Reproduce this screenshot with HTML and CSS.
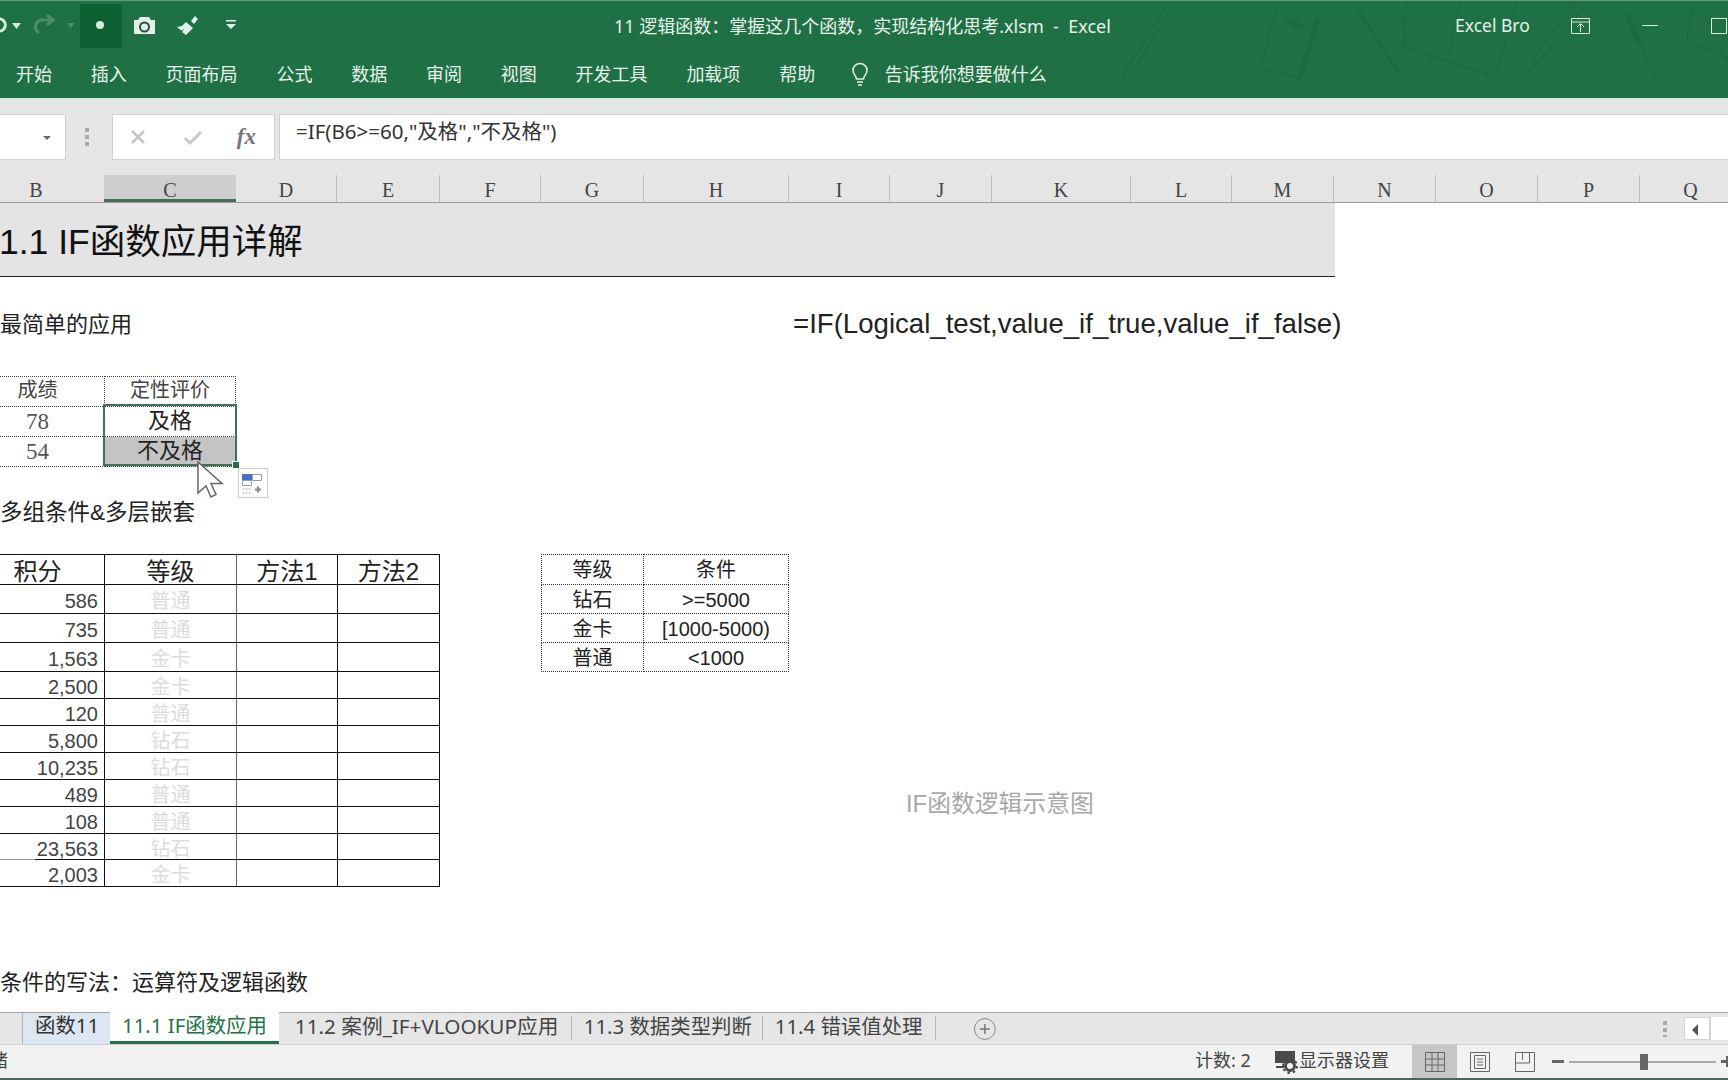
FILE: index.html
```html
<!DOCTYPE html>
<html lang="zh-CN">
    <head>
        <meta charset="utf-8">
        <title>11 逻辑函数 - Excel</title>
        <link rel="stylesheet" href="styles.css">
    </head>
    <body>
        <header class="ribbon">
            <svg class="ribbon-art" width="628" height="98" viewBox="1100 0 628 98">
                <g fill="none" stroke="#1a663c" stroke-width="2">
                    <path d="M1170 10L1128 78M1164 8L1122 76"/>
                    <path d="M1276 10L1260 67L1300 77"/>
                    <path d="M1318 17L1300 77" stroke-width="5"/>
                    <path d="M1286 18L1304 28" stroke-width="6"/>
                    <path d="M1356 5L1398 72" stroke-width="3"/>
                    <path d="M1406 0L1404 47L1496 75L1516 0M1460 0L1448 57"/>
                    <path d="M1588 3L1528 73M1574 0L1532 60"/>
                    <path d="M1627 12L1655 77"/>
                    <path d="M1627 12L1638 40" stroke-width="6"/>
                    <path d="M1693 3L1687 40L1728 57"/>
                </g>
            </svg>
            <div class="titlebar">
                <div class="qat">
                    <svg width="250" height="50" viewBox="0 0 250 50">
                        <path d="M-4 20a6 6 0 1 1 0 10" fill="none" stroke="#d8eadf" stroke-width="3"/>
                        <path d="M12 23h9l-4.500 6z" fill="#d8eadf"/>
                        <path d="M50 20h-8a7 7 0 0 0 -3 13M47 15l6 5l-6 5" fill="none" stroke="#4b8f6a" stroke-width="3"/>
                        <path d="M67 23h8l-4 5z" fill="#4b8f6a"/>
                        <rect x="80" y="4" width="42" height="44" fill="#0f6032"/>
                        <circle cx="100" cy="25" r="4" fill="#d8eadf"/>
                        <path d="M134 20h4l2-3h9l2 3h4v14h-21z" fill="#e3f0e8"/>
                        <circle cx="144.500" cy="27" r="4.500" fill="none" stroke="#21543a" stroke-width="2"/>
                        <path d="M191 21l4-5l3 3l-4 5zM186 22l7 6l-7 7l-4-3l2-3l-3 1.500l-4-3.500l5-1z" fill="#e3f0e8"/>
                        <path d="M226 20h10v1.500h-10zM226 24h10l-5 5z" fill="#e3f0e8"/>
                    </svg>
                </div>
                <div class="doc-title">11 逻辑函数：掌握这几个函数，实现结构化思考.xlsm &nbsp;-&nbsp; Excel</div>
                <div class="user-name">Excel Bro</div>
                <svg class="win-restore" width="19" height="16" viewBox="0 0 19 16">
                    <path d="M.5.5h18v15H.5zM.5 4h18M9.500 14V6M6 9l3.500-3.500L13 9" fill="none" stroke="#d8eadf"/>
                </svg>
                <div class="win-min"></div>
                <div class="win-max"></div>
            </div>
            <nav class="ribbon-tabs">
                <span>开始</span>
                <span>插入</span>
                <span>页面布局</span>
                <span>公式</span>
                <span>数据</span>
                <span>审阅</span>
                <span>视图</span>
                <span>开发工具</span>
                <span>加载项</span>
                <span>帮助</span>
                <svg class="bulb" width="20" height="24" viewBox="0 0 20 24">
                    <path d="M6.500 17c0-3-3.500-4.500-3.500-8.500a7 7 0 0 1 14 0c0 4-3.500 5.500-3.500 8.500zM7 20h6M8 23h4" fill="none" stroke="#e3f0e8" stroke-width="1.600"/>
                </svg>
                <span class="tell-me">告诉我你想要做什么</span>
            </nav>
        </header>

        <section class="formula-band">
            <div class="name-box"><i class="caret"></i></div>
            <div class="grip"></div>
            <div class="fx-box">
                <svg width="16" height="16" viewBox="0 0 16 16"><path d="M2 2l12 12M14 2L2 14" stroke="#c4c4c4" stroke-width="2.500"/></svg>
                <svg class="fx-check" width="20" height="16" viewBox="0 0 20 16"><path d="M2 9l5 5L18 3" fill="none" stroke="#c8c8c8" stroke-width="3"/></svg>
                <span class="fx-label">fx</span>
            </div>
            <div class="formula-input">=IF(B6&gt;=60,"及格","不及格")</div>
        </section>

        <div class="col-header">
            <span class="col-first">B</span>
            <span class="col-active">C</span>
            <span>D</span><span>E</span><span>F</span><span>G</span><span>H</span><span>I</span>
            <span>J</span><span>K</span><span>L</span><span>M</span><span>N</span><span>O</span><span>P</span><span>Q</span>
        </div>

        <main class="sheet">
            <h1 class="sheet-title">1.1 IF函数应用详解</h1>

            <div class="note-row">
                <div class="note">最简单的应用</div>
                <div class="syntax">=IF(Logical_test,value_if_true,value_if_false)</div>
            </div>

            <table class="score-table">
                <tr><th>成绩</th><th>定性评价</th></tr>
                <tr><td class="num-serif">78</td><td class="result">及格</td></tr>
                <tr><td class="num-serif">54</td><td class="result result-on">不及格</td></tr>
            </table>

            <div class="note note-second">多组条件&amp;多层嵌套</div>

            <div class="tables-row">
                <table class="data-table">
                    <tr><th>积分</th><th>等级</th><th>方法1</th><th>方法2</th></tr>
                    <tr><td class="num">586</td><td class="level">普通</td><td></td><td></td></tr>
                    <tr><td class="num">735</td><td class="level">普通</td><td></td><td></td></tr>
                    <tr><td class="num">1,563</td><td class="level">金卡</td><td></td><td></td></tr>
                    <tr><td class="num">2,500</td><td class="level">金卡</td><td></td><td></td></tr>
                    <tr><td class="num">120</td><td class="level">普通</td><td></td><td></td></tr>
                    <tr><td class="num">5,800</td><td class="level">钻石</td><td></td><td></td></tr>
                    <tr><td class="num">10,235</td><td class="level">钻石</td><td></td><td></td></tr>
                    <tr><td class="num">489</td><td class="level">普通</td><td></td><td></td></tr>
                    <tr><td class="num">108</td><td class="level">普通</td><td></td><td></td></tr>
                    <tr><td class="num">23,563</td><td class="level">钻石</td><td></td><td></td></tr>
                    <tr><td class="num">2,003</td><td class="level">金卡</td><td></td><td></td></tr>
                </table>
                <table class="rule-table">
                    <tr><th>等级</th><th>条件</th></tr>
                    <tr><td>钻石</td><td>&gt;=5000</td></tr>
                    <tr><td>金卡</td><td>[1000-5000)</td></tr>
                    <tr><td>普通</td><td>&lt;1000</td></tr>
                </table>
            </div>

            <div class="note note-third">条件的写法：运算符及逻辑函数</div>

            <div class="chart-label">IF函数逻辑示意图</div>
            <div class="selection"><i class="fill-handle"></i></div>
            <svg class="quick-analysis" width="30" height="30" viewBox="0 0 30 30">
                <rect x=".5" y=".5" width="29" height="29" fill="#fff" stroke="#ccc"/>
                <rect x="4" y="6" width="10" height="6" fill="#4472c4"/>
                <path d="M14.500 6.500h9v6h-9zM4.500 12.500h9v5h-9z" fill="none" stroke="#9a9a9a"/>
                <path d="M4.500 21h9M4.500 25h9" stroke="#aaa" stroke-dasharray="2 1"/>
                <path d="M17 21.500h6M20 18.500v6" stroke="#888" stroke-width="2"/>
            </svg>
            <svg class="cursor" width="28" height="40" viewBox="0 0 28 40">
                <path d="M2 2v31l8-7l5 11l5-2.500l-5-11h11z" fill="#fff" stroke="#666" stroke-width="1.500"/>
            </svg>
        </main>

        <div class="tabbar">
            <div class="tab tab-linked">函数11</div>
            <div class="tab tab-active">11.1 IF函数应用</div>
            <div class="tab tab-plain">11.2 案例_IF+VLOOKUP应用</div>
            <div class="tab tab-plain">11.3 数据类型判断</div>
            <div class="tab tab-plain">11.4 错误值处理</div>
            <svg class="tab-add" width="24" height="24" viewBox="0 0 24 24">
                <circle cx="12" cy="12" r="10.500" fill="none" stroke="#888"/>
                <path d="M7 12h10M12 7v10" stroke="#777" stroke-width="1.500"/>
            </svg>
            <div class="grip grip-tabs"></div>
            <div class="scroll-left"><i></i></div>
            <div class="scroll-track"></div>
        </div>

        <footer class="statusbar">
            <span class="status-ready">绪</span>
            <span class="status-count">计数: 2</span>
            <svg class="status-screen" width="25" height="25" viewBox="0 0 25 25">
                <path d="M1 2h20v12H1z" fill="#4a4a4a"/>
                <path d="M2 18h8" stroke="#4a4a4a" stroke-width="2"/>
                <circle cx="16" cy="17" r="4.500" fill="none" stroke="#4a4a4a" stroke-width="3"/>
                <circle cx="16" cy="17" r="7" fill="none" stroke="#4a4a4a" stroke-width="2" stroke-dasharray="2.500 3"/>
            </svg>
            <span class="status-display">显示器设置</span>
            <div class="view-btn view-on">
                <svg width="20" height="20" viewBox="0 0 20 20"><path d="M.5.5h19v19H.5zM.5 7h19M.5 13h19M7 .5v19M13 .5v19" fill="none" stroke="#666"/></svg>
            </div>
            <div class="view-btn">
                <svg width="20" height="20" viewBox="0 0 20 20"><path d="M.5.5h19v19H.5zM4.500 3.500h11v13h-11zM7 7h6M7 10h6M7 13h6" fill="none" stroke="#666"/></svg>
            </div>
            <div class="view-btn">
                <svg width="20" height="20" viewBox="0 0 20 20"><path d="M.5.5h19v19H.5zM.5 11h14V.5M7.500.5V8" fill="none" stroke="#666"/></svg>
            </div>
            <div class="zoom-slider">
                <i class="zoom-minus"></i>
                <div class="zoom-track"><i class="zoom-thumb"></i></div>
                <i class="zoom-plus"></i>
            </div>
        </footer>
    </body>
</html>
```

FILE: styles.css
```css
*{
    box-sizing: border-box;
}
html, body{
    margin: 0;
    padding: 0;
}
body{
    width: 1728px;
    height: 1080px;
    overflow: hidden;
    display: flex;
    flex-direction: column;
    background: #FFF;
    color: #333;
    font-family: "Noto Sans", "Noto Sans CJK SC", sans-serif;
}

/* ribbon */
.ribbon{
    position: relative;
    height: 98px;
    flex: none;
    background: #1F7145;
    border-top: 1px solid #5E9C7C;
    color: #E6F2EA;
    overflow: hidden;
}
.ribbon-art{
    position: absolute;
    top: 0;
    right: 0;
    opacity: .5;
    filter: blur(.6px);
}
.titlebar{
    position: relative;
    height: 49px;
    display: flex;
    align-items: center;
}
.qat{
    width: 614px;
    height: 50px;
    flex: none;
}
.qat svg{
    display: block;
    margin-top: -1px;
}
.doc-title{
    width: 841px;
    flex: none;
    margin-top: -2px;
    font-size: 18px;
    white-space: nowrap;
}
.user-name{
    width: 116px;
    flex: none;
    margin-top: -2px;
    font-size: 17.500px;
}
.win-restore{
    flex: none;
}
.win-min{
    width: 16px;
    height: 1px;
    margin-left: 52px;
    flex: none;
    background: #D8EADF;
}
.win-max{
    width: 16px;
    height: 16px;
    margin-left: 53px;
    flex: none;
    border: 1px solid #D8EADF;
}
.ribbon-tabs{
    position: relative;
    height: 48px;
    padding-left: 16px;
    display: flex;
    align-items: center;
    gap: 38.800px;
    font-size: 18px;
    line-height: 1;
}
.bulb{
    margin-right: -24px;
    margin-left: -4px;
}

/* formula bar */
.formula-band{
    height: 62px;
    flex: none;
    padding-top: 15px;
    display: flex;
    background: #E5E6E6;
    border-top: 1px solid #D5E8DC;
}
.name-box{
    position: relative;
    width: 66px;
    height: 46px;
    background: #FFF;
    border: 1px solid #D0D0D0;
    border-left: 0;
}
.caret{
    position: absolute;
    top: 21px;
    right: 14px;
    border: 4px solid transparent;
    border-top-color: #666;
    border-bottom: 0;
}
.grip{
    width: 4px;
    height: 18px;
    margin: 14px 19px 0 19px;
    background: repeating-linear-gradient(#A8A8A8 0 4px, transparent 4px 7px);
}
.formula-band .grip{
    margin-right: 23px;
}
.fx-box{
    width: 163px;
    height: 46px;
    padding: 0 18px 0 17px;
    display: flex;
    align-items: center;
    justify-content: space-between;
    background: #FFF;
    border: 1px solid #D0D0D0;
}
.fx-check{
    margin-left: 4px;
}
.fx-label{
    font-family: "Liberation Serif", serif;
    font-style: italic;
    font-weight: bold;
    font-size: 23px;
    color: #777;
}
.formula-input{
    flex: 1;
    height: 46px;
    margin-left: 4px;
    padding: 0 0 0 16px;
    background: #FFF;
    border-top: 1px solid #D0D0D0;
    border-bottom: 1px solid #D0D0D0;
    border-left: 1px solid #D0D0D0;
    font-size: 20.500px;
    white-space: nowrap;
}

/* column letters */
.col-header{
    height: 43px;
    flex: none;
    padding-top: 15px;
    display: grid;
    grid-template-columns: 104px 132px 101px 103px 101px 103px 145px 101px 102px 139px 101px 102px 102px 102px 102px 102px;
    grid-template-rows: 27px;
    background: #E5E5E5;
    border-bottom: 1px solid #9C9C9C;
    font-family: "Liberation Serif", serif;
    font-size: 20px;
    line-height: 30px;
    color: #444;
    text-align: center;
}
.col-header span{
    border-right: 1px solid #BDBDBD;
}
.col-first{
    padding-right: 32px;
    border-right: 0 !important;
}
.col-active{
    background: #CFCFCF;
    border-bottom: 3px solid #40705A;
    border-right: 0 !important;
}

/* sheet */
.sheet{
    position: relative;
    flex: 1;
    overflow: hidden;
    font-family: "Liberation Sans", "Noto Sans CJK SC", sans-serif;
    color: #222;
}
.sheet-title{
    width: 1335px;
    height: 74px;
    margin: 0;
    padding-top: 13px;
    background: #E4E4E4;
    border-bottom: 1px solid #222;
    font-size: 35.500px;
    font-weight: normal;
    line-height: 52px;
    color: #111;
    text-indent: -1px;
    white-space: nowrap;
}
.note-row{
    height: 99px;
    padding-top: 33px;
    display: flex;
    align-items: flex-start;
}
.note{
    font-size: 22px;
    line-height: 30px;
    white-space: nowrap;
}
.syntax{
    margin-left: 661px;
    margin-top: -1px;
    font-size: 27.600px;
    line-height: 30px;
    white-space: nowrap;
}
table{
    border-collapse: collapse;
    table-layout: fixed;
}
th, td{
    padding: 0;
    font-weight: normal;
    line-height: 1;
    text-align: center;
    white-space: nowrap;
}

.score-table{
    width: 238px;
    margin-left: -2px;
    font-size: 20px;
}
.score-table tr{
    height: 30px;
}
.score-table th, .score-table td{
    border: 1px dotted #444;
}
.score-table th:first-child, .score-table td:first-child{
    width: 106px;
    padding-right: 28px;
}
.score-table th{
    padding-bottom: 3px;
    color: #444;
}
.num-serif{
    font-size: 23px;
    font-family: "Liberation Serif", serif;
    color: #555;
}
.result{
    padding-bottom: 2px;
    font-size: 22px;
    color: #222;
}
.result-on{
    background: #C4C4C4;
}

.note-second{
    margin-top: 31px;
    font-size: 22.500px;
}
.tables-row{
    margin-top: 26px;
    display: flex;
    align-items: flex-start;
}
.data-table{
    width: 442px;
    margin-left: -2px;
    font-size: 24px;
}
.data-table th, .data-table td{
    padding-top: 4px;
    border: 1px solid #111;
}
.data-table th:nth-child(1){ width: 106px; padding-right: 28px; }
.data-table th:nth-child(2){ width: 132px; }
.data-table th:nth-child(3){ width: 101px; }
.data-table tr{ height: 27px; }
.data-table tr:nth-child(-n+4){ height: 29px; }
.data-table tr:first-child{ height: 30px; }
.data-table tr:nth-child(11){ height: 26px; }
.data-table td{
    font-size: 20px;
}
.data-table .num{
    padding-right: 6px;
    text-align: right;
    color: #444;
}
.data-table .level{
    color: #DCDCDC;
}
.data-table td:nth-child(2), .data-table th:nth-child(2){
    border-left-color: #666;
    border-right-color: #666;
}
.data-table tr:last-child .num{
    position: relative;
}
.data-table tr:last-child .num::before{
    content: "";
    position: absolute;
    top: -1px;
    left: 0;
    width: 36px;
    height: 1px;
    background: #999;
}
.rule-table{
    width: 248px;
    margin-left: 101px;
    font-size: 20px;
}
.rule-table th, .rule-table td{
    border: 1px dotted #333;
}
.rule-table td{
    padding-top: 2px;
}
.rule-table th:first-child{
    width: 102px;
}
.rule-table tr{
    height: 29px;
}
.rule-table tr:first-child{
    height: 30px;
}
.note-third{
    margin-top: 81px;
}

/* things floating over the grid */
.chart-label{
    position: absolute;
    top: 586px;
    left: 906px;
    font-size: 23.800px;
    line-height: 30px;
    color: #A8A8A8;
}
.selection{
    position: absolute;
    top: 201px;
    left: 103px;
    width: 134px;
    height: 62px;
    border: 2px solid #3F7158;
}
.fill-handle{
    position: absolute;
    right: -5px;
    bottom: -5px;
    width: 8px;
    height: 8px;
    background: #2F6B52;
    border: 1px solid #FFF;
}
.quick-analysis{
    position: absolute;
    top: 265px;
    left: 238px;
}
.cursor{
    position: absolute;
    top: 257px;
    left: 196px;
}

/* sheet tabs */
.tabbar{
    height: 33px;
    flex: none;
    padding-left: 22px;
    display: flex;
    align-items: stretch;
    background: #E6E6E6;
    border-top: 1px solid #A0A0A0;
    border-bottom: 1px solid #D0D0D0;
    font-size: 20.400px;
    line-height: 25px;
    color: #444;
    white-space: nowrap;
}
.tab{
    padding: 0 12px;
}
.tab-linked{
    width: 88px;
    background: #DCE7F2;
    border-left: 1px solid #B5B5B5;
    color: #333;
}
.tab-active{
    width: 169px;
    margin-top: -1px;
    padding-top: 1px;
    background: #FFF;
    border-bottom: 3px solid #217346;
    color: #217346;
}
.tab-plain{
    margin: 3px 0 4px;
    line-height: 20px;
    border-right: 1px solid #B5B5B5;
}
.tab-plain:nth-child(3){
    width: 295px;
    padding-left: 16px;
    font-size: 20.700px;
}
.tab-plain:nth-child(4){
    width: 191px;
}
.tab-plain:nth-child(5){
    width: 174px;
}
.tab-add{
    margin: 4px 0 0 37px;
}
.grip-tabs{
    margin: 8px 17px 0 667px;
    height: 16px;
}
.scroll-left{
    position: relative;
    width: 26px;
    margin: 4px 0;
    background: #FFF;
    border: 1px solid #D5D5D5;
}
.scroll-left i{
    position: absolute;
    top: 6px;
    left: 7px;
    border: 6px solid transparent;
    border-right-color: #555;
    border-left: 0;
}
.scroll-track{
    width: 18px;
    margin: 4px 0;
    background: #FFF;
    border-left: 1px solid #D5D5D5;
}

/* status bar */
.statusbar{
    height: 35px;
    flex: none;
    display: flex;
    align-items: center;
    background: #F1F2F1;
    border-bottom: 2px solid #3C6E58;
    font-size: 18px;
    line-height: 24px;
    color: #444;
    white-space: nowrap;
}
.status-ready{
    width: 8px;
    padding-bottom: 4px;
    direction: rtl;
    overflow: hidden;
}
.status-count{
    margin-left: auto;
    width: 79px;
    padding-bottom: 4px;
}
.status-screen{
    width: 25px;
}
.status-display{
    width: 113px;
    padding-bottom: 4px;
}
.view-btn{
    width: 45px;
    height: 100%;
    display: flex;
    align-items: center;
    justify-content: center;
}
.view-on{
    background: #C6C6C6;
}
.zoom-slider{
    width: 181px;
    margin-left: 5px;
    margin-right: -5px;
    display: flex;
    align-items: center;
    gap: 5px;
}
.zoom-minus{
    width: 12px;
    height: 3px;
    background: #666;
}
.zoom-track{
    position: relative;
    width: 148px;
    height: 2px;
    background: #A8A8A8;
}
.zoom-thumb{
    position: absolute;
    top: -7px;
    left: 71px;
    width: 8px;
    height: 16px;
    background: #666;
}
.zoom-plus{
    position: relative;
    width: 12px;
    height: 3px;
    background: #666;
}
.zoom-plus::after{
    content: "";
    position: absolute;
    top: -4px;
    left: 4.500px;
    width: 3px;
    height: 11px;
    background: #666;
}
```
